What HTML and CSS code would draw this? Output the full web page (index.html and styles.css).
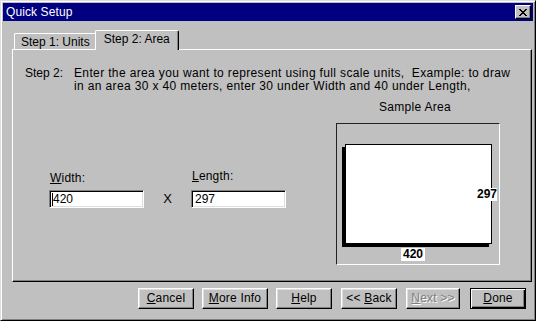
FILE: index.html
```html
<!DOCTYPE html>
<html>
<head>
<meta charset="utf-8">
<link rel="stylesheet" href="styles.css">
</head>
<body>
<div class="window">
  <div class="titlebar">
    <span class="title">Quick Setup</span>
    <span class="close"><svg width="8" height="7" viewBox="0 0 8 7" shape-rendering="crispEdges"><path d="M0 0h2v1h-2zM6 0h2v1h-2zM1 1h2v1h-2zM5 1h2v1h-2zM2 2h4v1h-4zM3 3h2v1h-2zM2 4h4v1h-4zM1 5h2v1h-2zM5 5h2v1h-2zM0 6h2v1h-2zM6 6h2v1h-2z" fill="#000"/></svg></span>
  </div>
  <div class="body">
    <div class="tabs">
      <div class="tab">Step 1: Units</div>
      <div class="tab active">Step 2: Area</div>
    </div>
    <div class="panel">
      <div class="intro">
        <span class="step">Step 2:</span>
        <p class="lines">Enter the area you want to represent using full scale units,&nbsp; Example: to draw<br>in an area 30 x 40 meters, enter 30 under Width and 40 under Length,</p>
      </div>
      <div class="main">
        <div class="fields">
          <div class="field">
            <label class="lbl"><u>W</u>idth:</label>
            <div class="input"><span class="caret"></span>420</div>
          </div>
          <span class="times">X</span>
          <div class="field">
            <label class="lbl lbl-up"><u>L</u>ength:</label>
            <div class="input">297</div>
          </div>
        </div>
        <div class="sample">
          <div class="sample-title">Sample Area</div>
          <div class="frame">
            <div class="rect"></div>
            <span class="dim dim-h">297</span>
            <span class="dim dim-w">420</span>
          </div>
        </div>
      </div>
    </div>
    <div class="buttons">
      <button class="btn btn-cancel"><u>C</u>ancel</button>
      <button class="btn btn-more"><u>M</u>ore Info</button>
      <button class="btn btn-help"><u>H</u>elp</button>
      <button class="btn btn-back">&lt;&lt; <u>B</u>ack</button>
      <button class="btn btn-next disabled"><u>N</u>ext &gt;&gt;</button>
      <button class="btn btn-done default"><u>D</u>one</button>
    </div>
  </div>
</div>
</body>
</html>
```
FILE: styles.css
```css
html, body {
  margin: 0;
  padding: 0;
  background: #c0c0c0;
}
body {
  font-family: "Liberation Sans", Arial, sans-serif;
  font-size: 12px;
  color: #000;
}
.window {
  width: 536px;
  height: 321px;
  box-sizing: border-box;
  border: 1px solid;
  border-color: #dfdfdf #000 #000 #dfdfdf;
  box-shadow: inset 1px 1px #fff, inset -1px -1px #808080;
  padding: 2px;
  display: flex;
  flex-direction: column;
}
.titlebar {
  height: 18px;
  background: #000080;
  color: #fff;
  display: flex;
  align-items: center;
  justify-content: space-between;
  padding: 0 2px 0 3px;
}
.title {
  font-size: 12px;
  line-height: 14px;
  letter-spacing: 0.1px;
}
.close {
  width: 16px;
  height: 14px;
  box-sizing: border-box;
  background: #c0c0c0;
  border: 1px solid;
  border-color: #fff #000 #000 #fff;
  box-shadow: inset -1px -1px #808080;
  display: flex;
  align-items: center;
  justify-content: center;
}
.close svg { display: block; margin-left: -1px; }
.body {
  flex: 1;
  display: flex;
  flex-direction: column;
  padding: 9px 0 0 9px;
}
.tabs {
  display: flex;
  align-items: flex-end;
  height: 20px;
  padding-left: 2px;
  margin-bottom: -1px;
  position: relative;
  z-index: 1;
}
.tab {
  height: 17px;
  box-sizing: border-box;
  padding: 0 6px;
  border: 1px solid;
  border-color: #fff #000 transparent #fff;
  border-bottom: none;
  box-shadow: inset -1px 0 #808080;
  border-radius: 2px 2px 0 0;
  line-height: 17px;
  white-space: nowrap;
}
.tab.active {
  height: 20px;
  margin-left: -2px;
  padding: 0 8px;
  background: #c0c0c0;
  line-height: 16px;
}
.panel {
  width: 520px;
  height: 233px;
  box-sizing: border-box;
  border: 1px solid;
  border-color: #fff #000 #000 #fff;
  box-shadow: inset -1px -1px #808080;
  padding: 17px 0 0 12px;
}
.intro {
  display: flex;
  line-height: 13px;
}
.step {
  width: 49px;
  flex: none;
}
.lines {
  margin: 0;
  white-space: nowrap;
  letter-spacing: 0.36px;
}
.main {
  display: flex;
  align-items: flex-start;
  margin-top: 8px;
  padding-left: 24px;
}
.fields {
  display: flex;
  align-items: flex-end;
  margin-top: 69px;
}
.field {
  display: flex;
  flex-direction: column;
  width: 95px;
}
.lbl {
  line-height: 13px;
  padding-left: 1px;
  margin-bottom: 5px;
  letter-spacing: 0.2px;
}
.lbl-up {
  margin-bottom: 7px;
}
.input {
  height: 18px;
  box-sizing: border-box;
  background: #fff;
  border: 1px solid;
  border-color: #808080 #fff #fff #808080;
  box-shadow: inset 1px 1px #000, inset -1px -1px #dfdfdf;
  padding-left: 3px;
  line-height: 16px;
  display: flex;
  align-items: center;
}
.caret {
  width: 1px;
  height: 13px;
  background: #000;
  margin-left: -1px;
}
.times {
  width: 47px;
  text-align: center;
  line-height: 18px;
  height: 18px;
  font-size: 13px;
}
.sample {
  margin-left: 50px;
  width: 164px;
  display: flex;
  flex-direction: column;
}
.sample-title {
  text-align: center;
  padding-right: 6px;
  line-height: 13px;
  margin-bottom: 9px;
  letter-spacing: 0.3px;
}
.frame {
  height: 142px;
  box-sizing: border-box;
  border: 1px solid;
  border-color: #222 #fff #fff #222;
  position: relative;
}
.rect {
  position: absolute;
  left: 8px;
  top: 20px;
  width: 147px;
  height: 100px;
  box-sizing: border-box;
  background: #fff;
  border: 1px solid #000;
  box-shadow: -3px 3px 0 #000;
}
.dim {
  position: absolute;
  width: 24px;
  height: 13px;
  background: #fff;
  font-weight: bold;
  line-height: 13px;
  text-align: right;
}
.dim-h { left: 136px; top: 64px; }
.dim-w { left: 64px; top: 124px; text-align: center; }
.buttons {
  display: flex;
  justify-content: flex-end;
  margin-top: 6px;
  padding-right: 7px;
}
.btn {
  width: 56px;
  height: 21px;
  box-sizing: border-box;
  background: #c0c0c0;
  font-family: inherit;
  font-size: 12px;
  letter-spacing: 0.2px;
  color: #000;
  border: 1px solid;
  border-color: #fff #000 #000 #fff;
  box-shadow: inset -1px -1px #808080, inset 1px 1px #dfdfdf;
  padding: 0;
  margin: 0;
  line-height: 17px;
}
.btn-more { width: 66px; margin-left: 8px; }
.btn-help { margin-left: 8px; }
.btn-back { margin-left: 9px; }
.btn-next { width: 54px; margin-left: 9px; }
.btn-done { margin-left: 10px; }
.btn.disabled {
  color: #808080;
  text-shadow: 1px 1px 0 #fff;
}
.btn.default {
  border: 1px solid #000;
  box-shadow: inset 1px 1px #fff, inset -1px -1px #000, inset -2px -2px #808080;
}
```
